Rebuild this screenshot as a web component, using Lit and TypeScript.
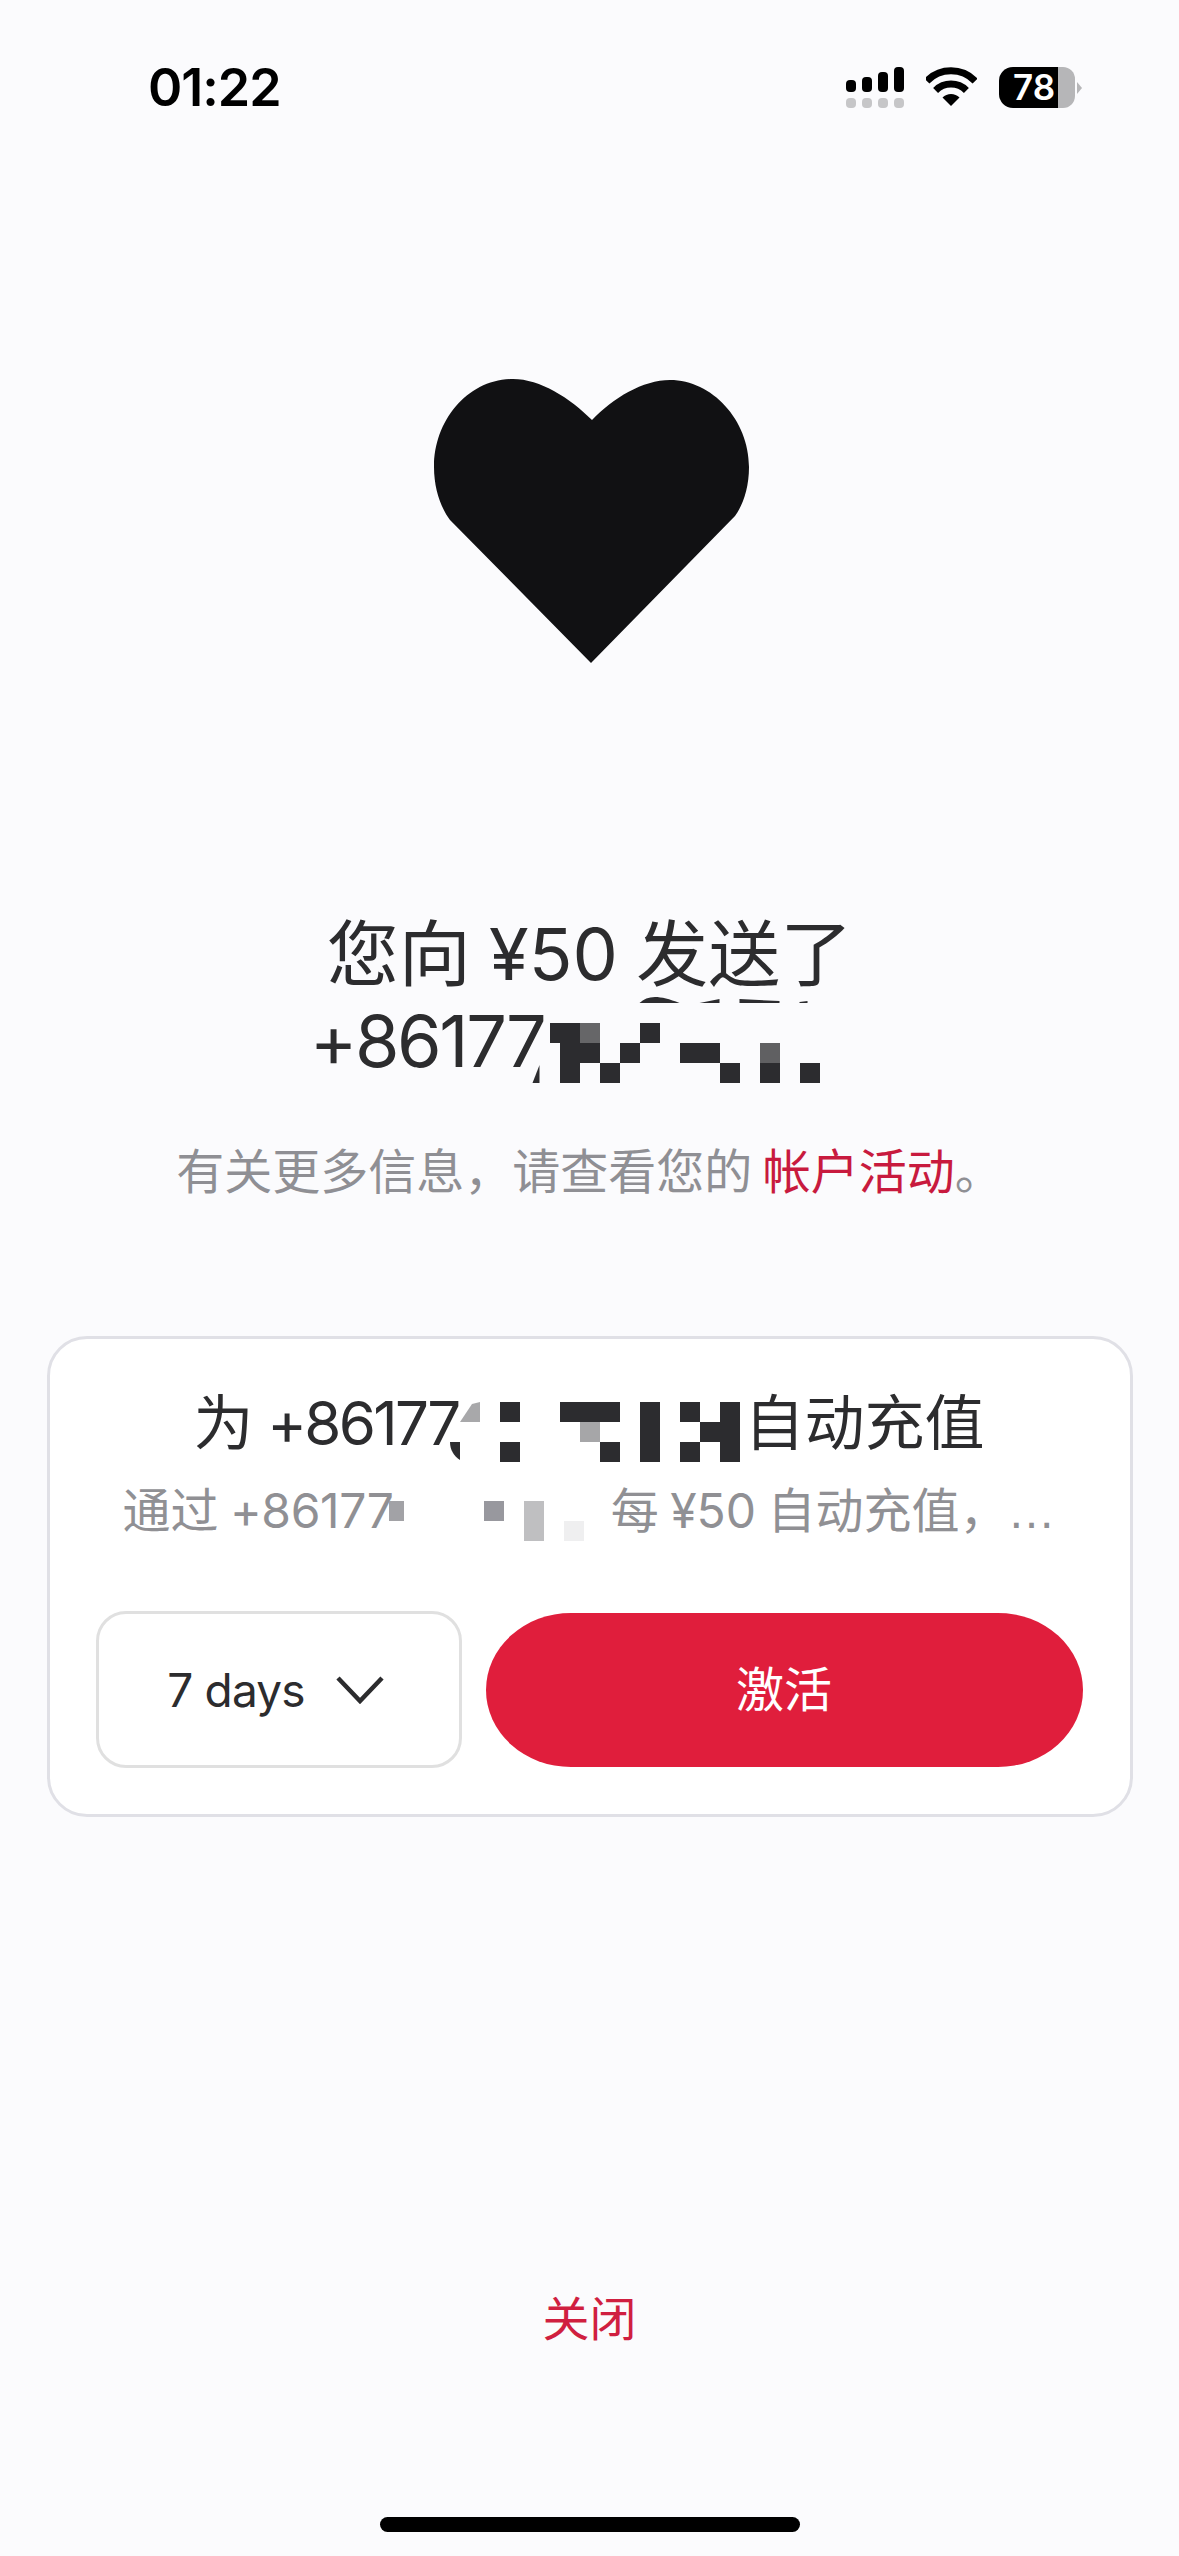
import { LitElement, html, css, svg } from "lit";
import { customElement } from "lit/decorators.js";

type Cell = [number, number, number, number, string];
const D = "#2c2c2f";

const titleCells: Cell[] = [
  [560, 1020, 20, 60, D], [550, 1020, 30, 20, D], [580, 1020, 20, 20, "#666668"], [640, 1020, 20, 20, D],
  [580, 1040, 20, 20, D], [620, 1040, 20, 20, D], [680, 1040, 40, 20, D], [760, 1040, 20, 20, "#606062"],
  [600, 1060, 20, 20, D], [720, 1060, 20, 20, D], [760, 1060, 20, 20, D], [800, 1060, 20, 20, D],
];
const cardCells: Cell[] = [
  [500, 1400, 20, 20, D], [560, 1400, 60, 20, D], [640, 1400, 20, 60, D], [680, 1400, 20, 20, D], [720, 1400, 20, 20, D],
  [580, 1420, 20, 20, "#a6a6a8"], [700, 1420, 40, 20, D],
  [500, 1440, 20, 20, D], [600, 1440, 20, 20, D], [680, 1440, 20, 20, D], [720, 1440, 20, 20, D],
];
const subCells: Cell[] = [
  [385, 1500, 15, 20, "#a2a2a6"], [480, 1500, 20, 20, "#98989e"], [520, 1500, 20, 40, "#bfbfc1"], [560, 1520, 20, 20, "#efeff0"],
];
const rects = (cells: Cell[]) =>
  cells.map(([x, y, w, h, c]) => svg`<rect x=${x} y=${y} width=${w} height=${h} fill=${c} shape-rendering="crispEdges"></rect>`);

@customElement("app-root")
export class AppRoot extends LitElement {
  static styles = css`
    :host {
      display: block;
      width: 1179px;
      height: 2556px;
      background: #fbfbfd;
      font-family: Inter, "Noto Sans CJK SC", sans-serif;
      color: #2c2c2e;
      overflow: hidden;
    }
    .page { display: flex; flex-direction: column; align-items: center; height: 100%; }
    .status {
      align-self: stretch; display: flex; align-items: center; justify-content: space-between;
      padding: 67px 97px 0 148px; height: 41px;
    }
    .time { font-size: 52px; font-weight: 600; letter-spacing: -1px; color: #000; line-height: 41px; }
    .icons { display: flex; align-items: flex-start; gap: 22px; }
    .icons svg { display: block; }
    .battery { display: flex; align-items: center; height: 41px; }
    .batt-body {
      width: 59px; height: 41px; background: #000; color: #fff; border-radius: 14px 0 0 14px;
      box-sizing: border-box; padding-left: 14px; font-size: 35px; font-weight: 600; line-height: 41px;
    }
    .batt-end { width: 17px; height: 41px; background: #b6b6b8; border-radius: 0 12px 12px 0; }
    .nub { margin-left: 2px; }
    .heart { display: block; margin: 271px 0 0 3px; }
    .title { margin-top: 247px; font-size: 72px; line-height: 87px; text-align: center; white-space: nowrap; word-spacing: -2px; }
    .title .line { display: block; }
    .title .num { letter-spacing: -2.4px; }
    .mosaic { overflow: visible; display: inline-block; }
    .m-title { vertical-align: -16px; }
    .m-card { vertical-align: -17px; }
    .m-sub { vertical-align: -13px; }
    .info { margin-top: 58px; font-size: 48px; line-height: 60px; word-spacing: -3px; color: #8f8f94; white-space: nowrap; }
    .info .link { color: #c81a3e; }
    .card {
      margin-top: 134px; width: 1086px; box-sizing: border-box; background: #fff;
      border: 3px solid #e0e0e6; border-radius: 40px; padding: 48px 47px 46px 46px;
    }
    .card-title { font-size: 60px; line-height: 72px; text-align: center; white-space: nowrap; word-spacing: -3px; }
    .card-title .num { letter-spacing: -2.7px; }
    .card-sub { margin-top: 21px; font-size: 48px; line-height: 56px; text-align: center; color: #909094; white-space: nowrap; word-spacing: -2px; }
    .card-sub .num { letter-spacing: -0.4px; }
    .card-sub .ell { font-family: "Liberation Sans", sans-serif; }
    .row { margin-top: 70px; display: flex; align-items: center; gap: 24px; }
    .select {
      width: 366px; height: 157px; box-sizing: border-box; flex: none; display: flex; align-items: center;
      justify-content: center; gap: 31px; border: 3px solid #e0e0e0; border-radius: 30px;
      font-size: 46px; letter-spacing: -0.8px; background: #fff;
    }
    .select svg { margin-right: 6px; }
    .activate {
      flex: 1; height: 154px; box-sizing: border-box; padding-bottom: 7px; display: flex; align-items: center; justify-content: center;
      background: #e01e3c; color: #fff; font-size: 48px; border-radius: 85px / 77px;
    }
    .close { margin-top: auto; font-size: 47px; line-height: 56px; color: #d01f40; }
    .home { margin: 170px 0 24px; width: 420px; height: 15px; border-radius: 8px; background: #000; flex: none; }
  `;

  render() {
    return html`<div class="page">
      <div class="status">
        <span class="time">01:22</span>
        <div class="icons">
          <svg width="58" height="41" viewBox="846 67 58 41">
            <rect x="846" y="80" width="10" height="12" rx="4"></rect>
            <rect x="862" y="77" width="10" height="15" rx="4"></rect>
            <rect x="878" y="72" width="10" height="20" rx="4"></rect>
            <rect x="894" y="67" width="10" height="25" rx="4"></rect>
            <g fill="#c6c6c8">
              <rect x="846" y="98" width="10" height="10" rx="4"></rect>
              <rect x="862" y="98" width="10" height="10" rx="4"></rect>
              <rect x="878" y="98" width="10" height="10" rx="4"></rect>
              <rect x="894" y="98" width="10" height="10" rx="4"></rect>
            </g>
          </svg>
          <svg width="51" height="41" viewBox="927 67 51 41">
            <g fill="none" stroke="#000" stroke-width="7">
              <path d="M927.9 81.1A33.5 33.5 0 0 1 976.1 81.1"></path>
              <path d="M936.6 90.4A22 22 0 0 1 967.4 90.4"></path>
            </g>
            <path d="M943.5 97.5A12 12 0 0 1 960.5 97.5L952 106Z"></path>
          </svg>
          <div class="battery">
            <div class="batt-body">78</div>
            <div class="batt-end"></div>
            <svg class="nub" width="5" height="12" viewBox="0 0 5 12"><path d="M0 0L5 6L0 12Z" fill="#b6b6b8"></path></svg>
          </div>
        </div>
      </div>

      <svg class="heart" width="315" height="284" viewBox="434 379 315 284">
        <path fill="#111113" d="M592 420C570 398 540 379 513 379C468 379 434 420 434 467C434 489 441 508 450 520L591 663L735 516C743 505 749 488 749 467C749 420 712 380 670 380C643 380 613 398 592 420Z"></path>
      </svg>

      <div class="title">
        <span class="line">您向 ¥50 发送了</span>
        <span class="line"><span class="num">+86177</span><svg class="mosaic m-title" width="325" height="60" viewBox="544.5 1020 325 60">
          ${rects(titleCells)}
          <path fill="${D}" d="M533 1080L540 1062V1080Z"></path>
          <path fill="${D}" d="M640 1000C648 992 660 992 680 1000Z"></path>
          <path fill="${D}" d="M700 1000L720 996V1000Z"></path>
          <path fill="${D}" d="M740 996L780 998V1000H740Z"></path>
          <path fill="${D}" d="M800 999L808 998V1000H800Z"></path>
        </svg></span>
      </div>

      <div class="info">有关更多信息，请查看您的 <span class="link">帐户活动</span>。</div>

      <div class="card">
        <div class="card-title">为 <span class="num">+86177</span><svg class="mosaic m-card" width="286" height="60" viewBox="459 1400 286 60">
          ${rects(cardCells)}
          <path fill="#a8a8aa" d="M460 1420L472 1402L480 1400V1420Z"></path>
          <path fill="${D}" d="M450 1440H460V1458C454 1454 450 1448 450 1440Z"></path>
        </svg>自动充值</div>
        <div class="card-sub">通过 <span class="num">+86177</span><svg class="mosaic m-sub" width="217" height="40" viewBox="390 1500 217 40">
          ${rects(subCells)}
        </svg>每 ¥50 自动充值，<span class="ell">…</span></div>
        <div class="row">
          <div class="select">
            <span>7 days</span>
            <svg width="48" height="28" viewBox="0 0 48 28"><path d="M2 2L24 25L46 2" fill="none" stroke="#2c2c2e" stroke-width="4.5"></path></svg>
          </div>
          <div class="activate">激活</div>
        </div>
      </div>

      <div class="close">关闭</div>
      <div class="home"></div>
    </div>`;
  }
}
